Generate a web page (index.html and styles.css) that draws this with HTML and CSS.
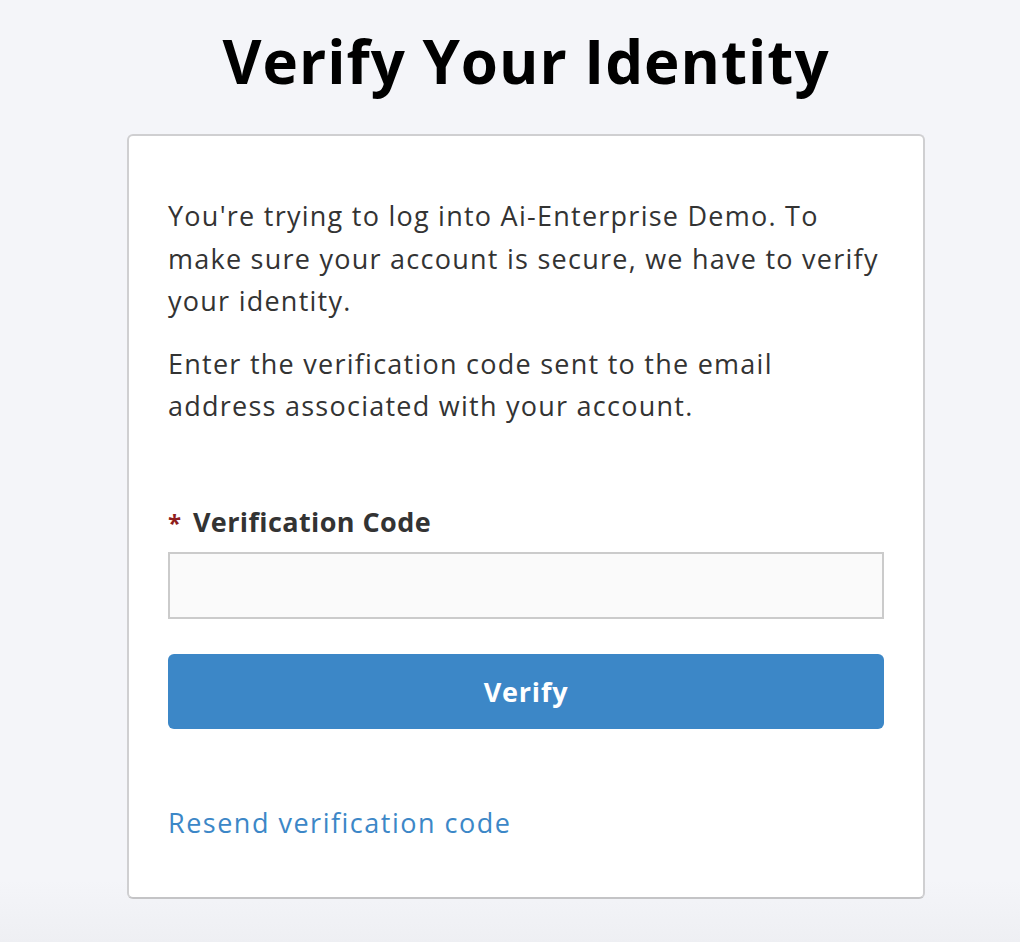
FILE: index.html
```html
<!DOCTYPE html>
<html lang="en">
<head>
<meta charset="utf-8">
<title>Verify Your Identity</title>
<link rel="stylesheet" href="styles.css">
</head>
<body>
<main class="page">
  <h1 class="title">Verify Your Identity</h1>
  <section class="card">
    <div class="intro">
      <p>You're trying to log into Ai-Enterprise Demo. To make sure your account is secure, we have to verify your identity.</p>
      <p>Enter the verification code sent to the email address associated with your account.</p>
    </div>
    <form class="form">
      <label class="label" for="code"><span class="req">*</span> Verification Code</label>
      <input class="input" id="code" type="text">
      <button class="btn" type="button">Verify</button>
    </form>
    <a class="link" href="#">Resend verification code</a>
  </section>
</main>
</body>
</html>
```
FILE: styles.css
```css
* { box-sizing: border-box; }
html, body { margin: 0; padding: 0; }
body {
  background: linear-gradient(#f4f5f9 0, #f4f5f9 880px, #eeeff3 942px);
  min-height: 942px;
  padding-left: 32px;
  font-family: "Open Sans", "Noto Sans", sans-serif;
  color: #333333;
}
.page {
  width: 798px;
  margin: 0 auto;
  display: flex;
  flex-direction: column;
  align-items: center;
}
.title {
  margin: 21px 0 0;
  font-size: 60px;
  line-height: 80px;
  font-weight: 700;
  color: #000;
  letter-spacing: 1px;
}
.card {
  width: 798px;
  margin-top: 33px;
  background: #fff;
  border: 2px solid #cfcfd1;
  border-bottom-color: #c4c4c6;
  border-radius: 6px;
  padding: 59px 39px 56px;
}
.intro p {
  margin: 0 0 20px;
  font-size: 27px;
  line-height: 42.5px;
  letter-spacing: 1.25px;
  color: #333;
}
.intro p:last-child { margin-bottom: 12px; }
.form {
  margin-top: 77px;
  display: flex;
  flex-direction: column;
}
.label {
  font-size: 27px;
  font-weight: 700;
  line-height: 34px;
  letter-spacing: 0.4px;
  color: #333;
  margin-bottom: 12px;
}
.req {
  color: #8f1d1d;
  margin-right: 4px;
  font-size: 24px;
}
.input {
  height: 67px;
  background: #fafafa;
  border: 2px solid #cbcbcb;
  border-radius: 0;
  font: inherit;
}
.btn {
  margin-top: 35px;
  height: 75px;
  background: #3c87c7;
  border: 0;
  border-radius: 6px;
  color: #fff;
  font-family: inherit;
  font-size: 27px;
  font-weight: 700;
  letter-spacing: 0.8px;
}
.link {
  display: inline-block;
  margin-top: 77px;
  font-size: 27px;
  line-height: 34px;
  letter-spacing: 1.5px;
  color: #3c87c7;
  text-decoration: none;
}
.card { padding-bottom: 57px; }
```
